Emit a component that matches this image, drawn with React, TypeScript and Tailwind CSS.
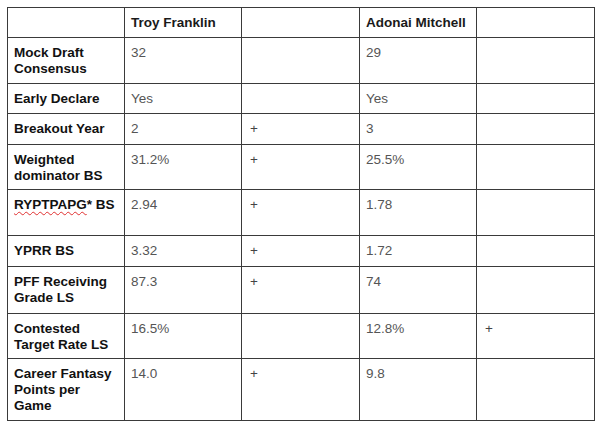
const rows = [
  { label: 'Mock Draft Consensus', a: '32', aPlus: false, b: '29', bPlus: false },
  { label: 'Early Declare', a: 'Yes', aPlus: false, b: 'Yes', bPlus: false },
  { label: 'Breakout Year', a: '2', aPlus: true, b: '3', bPlus: false },
  { label: 'Weighted dominator BS', a: '31.2%', aPlus: true, b: '25.5%', bPlus: false },
  { label: 'RYPTPAPG', a: '2.94', aPlus: true, b: '1.78', bPlus: false },
  { label: 'YPRR BS', a: '3.32', aPlus: true, b: '1.72', bPlus: false },
  { label: 'PFF Receiving Grade LS', a: '87.3', aPlus: true, b: '74', bPlus: false },
  { label: 'Contested Target Rate LS', a: '16.5%', aPlus: false, b: '12.8%', bPlus: true },
  { label: 'Career Fantasy Points per Game', a: '14.0', aPlus: true, b: '9.8', bPlus: false },
]

const cell = 'border-r border-b border-[#3a3a3a] pl-[6px] pr-[4px] pt-[7px] leading-[16px]'

export default function App() {
  return (
    <div className="w-[600px] h-[428px] bg-white pl-[7px] pt-[7px] font-['Liberation_Sans',Arial,sans-serif] text-[13.5px]">
      <div className="grid w-[588px] grid-cols-[117px_117px_118px_117px_118px] grid-rows-[30px_46px_30px_31px_45px_46px_31px_47px_45px_62px] border-l border-t border-[#3a3a3a]">
        <div className={cell} />
        <div className={`${cell} font-bold text-[#1a1a1a]`}>Troy Franklin</div>
        <div className={cell} />
        <div className={`${cell} font-bold text-[#1a1a1a]`}>Adonai Mitchell</div>
        <div className={cell} />

        {rows.map(r => (
          <div key={r.label} className="contents">
            <div className={`${cell} font-bold text-[#111]`}>
              {r.label === 'RYPTPAPG' ? (
                <>
                  <span className="underline decoration-wavy decoration-[#e03030] decoration-1 underline-offset-[2px]">RYPTPAPG</span>* BS
                </>
              ) : r.label}
            </div>
            <div className={`${cell} text-[#555]`}>{r.a}</div>
            <div className={`${cell} pl-[8px] text-[#444]`}>{r.aPlus ? '+' : ''}</div>
            <div className={`${cell} text-[#555]`}>{r.b}</div>
            <div className={`${cell} pl-[8px] text-[#444]`}>{r.bPlus ? '+' : ''}</div>
          </div>
        ))}
      </div>
    </div>
  )
}
